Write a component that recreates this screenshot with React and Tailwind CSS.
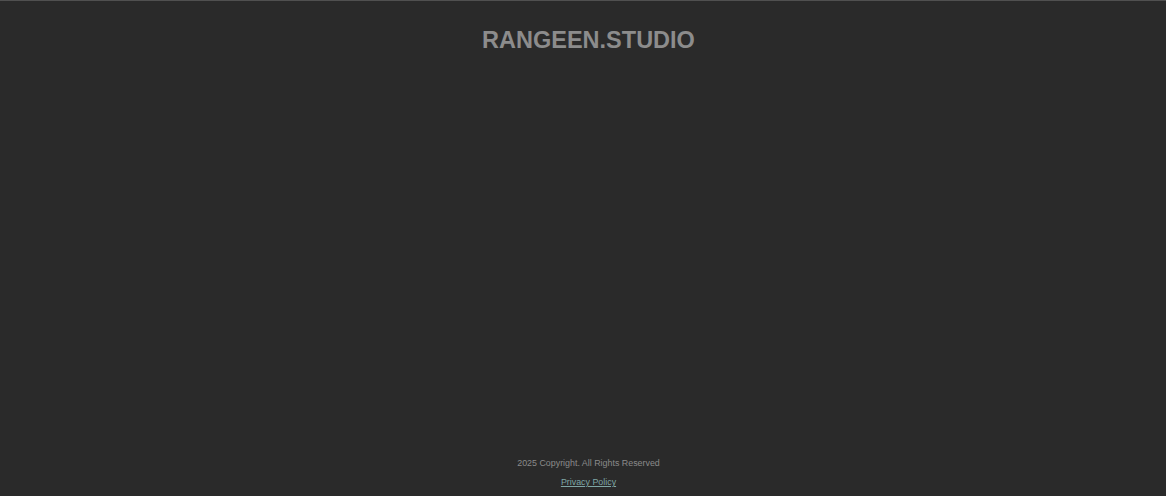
import React from "react";

export default function App() {
  return (
    <div
      className="flex h-[496px] flex-col border-t border-[#505050] bg-[#2a2a2a] pl-[11px]"
      style={{ fontFamily: '"Liberation Sans", Arial, sans-serif' }}
    >
      <header className="pt-[25px] text-center">
        <h1 className="text-[23.5px] font-bold leading-[28px] text-[#8c8c8c]">RANGEEN.STUDIO</h1>
      </header>
      <main className="flex-1" />
      <footer className="pb-[4px] text-center text-[8.9px] leading-[19px]">
        <p className="text-[#8a8a8a]">2025 Copyright. All Rights Reserved</p>
        <a href="#" className="text-[#7fa6a6] underline">Privacy Policy</a>
      </footer>
    </div>
  );
}
